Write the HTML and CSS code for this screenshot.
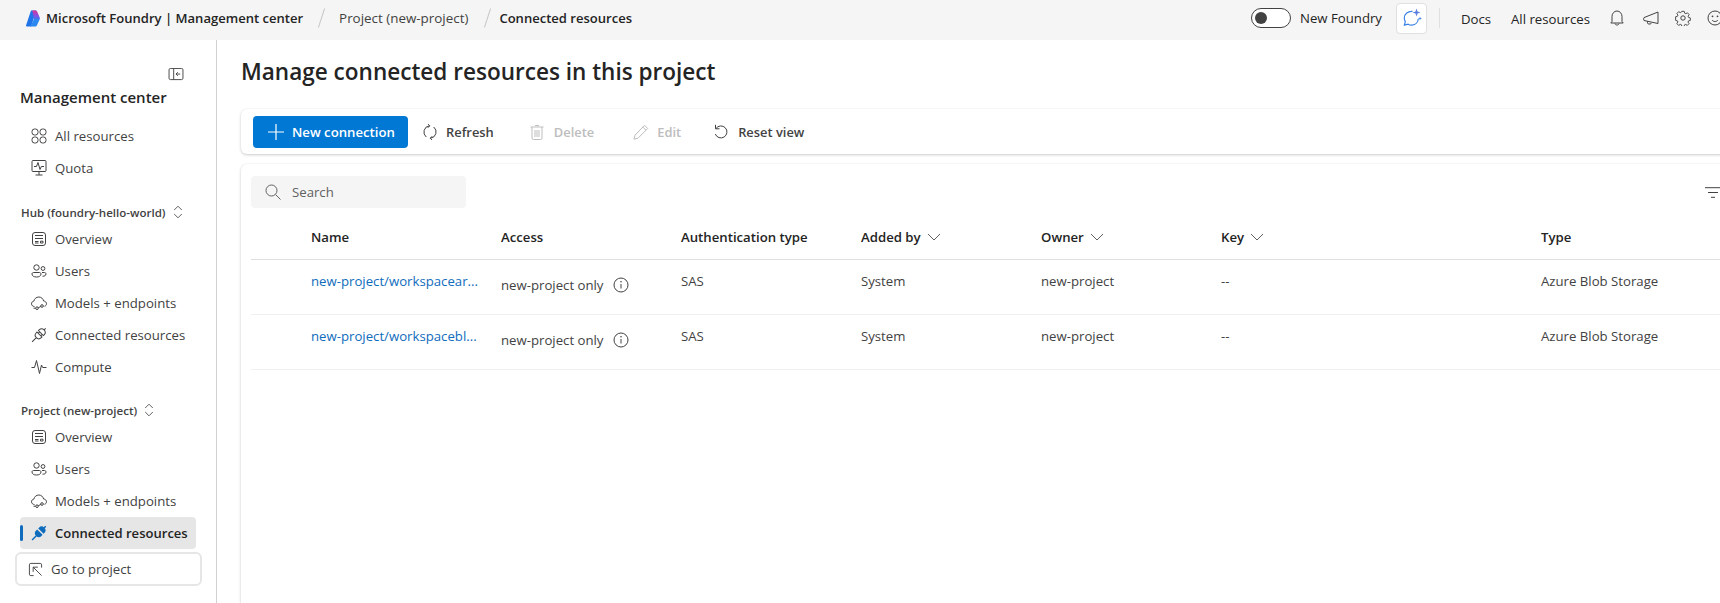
FILE: index.html
```html
<!DOCTYPE html>
<html lang="en">
<head>
<meta charset="utf-8">
<title>Manage connected resources</title>
<link rel="stylesheet" href="styles.css">
</head>
<body>
<svg class="defs" width="0" height="0" aria-hidden="true">
  <defs>
    <linearGradient id="logo-top" x1="0" y1="0" x2="0" y2="1"><stop offset="0" stop-color="#e0338f"/><stop offset=".55" stop-color="#8a4fe0"/><stop offset="1" stop-color="#3f78f0"/></linearGradient>
  </defs>
  <symbol id="i-overview" viewBox="0 0 16 16"><rect x="1.500" y="1.500" width="13" height="13" rx="2.500" fill="none" stroke="currentColor"/><path d="M4 4.500h8M4 7.500h8M4 10.500h3.500M4 12h3.500M9.500 10.200h2.500v1.800H9.500z" fill="none" stroke="currentColor"/></symbol>
  <symbol id="i-users" viewBox="0 0 16 16"><circle cx="5.500" cy="4.500" r="2.700" fill="none" stroke="currentColor"/><circle cx="12" cy="5.500" r="1.900" fill="none" stroke="currentColor"/><path d="M1 11c0-1 .8-1.500 1.700-1.500h5.600c.9 0 1.700.5 1.700 1.500 0 2-2 3-4.500 3S1 13 1 11zM11 9.500h2.500c.9 0 1.500.6 1.500 1.500 0 1.500-1.500 2.300-3.500 2.200" fill="none" stroke="currentColor"/></symbol>
  <symbol id="i-cloud" viewBox="0 0 16 16"><path d="M3.500 11.500C1.800 11.500.5 10.300.5 8.800c0-1.400 1-2.500 2.400-2.700C3.300 3.800 5.300 2 7.800 2c2.400 0 4.300 1.700 4.800 4 1.700.1 2.900 1.300 2.900 2.800 0 1.200-.8 2.200-2 2.500" fill="none" stroke="currentColor"/><circle cx="6" cy="13.200" r="1.300" fill="none" stroke="currentColor"/><circle cx="11" cy="11" r="1.300" fill="none" stroke="currentColor"/><path d="M7.200 12.700l2.600-1.200M2.500 13.200h2.200" fill="none" stroke="currentColor"/></symbol>
  <symbol id="i-plug" viewBox="0 0 16 16"><g transform="rotate(45 8 8)" fill="none" stroke="currentColor"><path d="M4.500 5.300v-1a3.500 3.500 0 0 1 7 0v1zM4.500 7.300h7v1a3.500 3.500 0 0 1-7 0zM8 .8v-2.300M8 11.800v6M6.200 5.300v2M9.800 5.300v2"/></g></symbol>
  <symbol id="i-plug-on" viewBox="0 0 16 16"><g transform="rotate(45 8 8)"><path d="M4.200 5.300v-1a3.800 3.800 0 0 1 7.600 0v1zM4.200 6.800h7.600v1.500a3.800 3.800 0 0 1-7.600 0z" fill="#0f6cbd"/><path d="M8 .8v-2.300M8 11.800v6" stroke="#0f6cbd" stroke-width="1.500" fill="none"/></g></symbol>
  <symbol id="i-updown" viewBox="0 0 10 14"><path d="M1.200 5L5 1.200 8.800 5M1.200 9L5 12.800 8.800 9" fill="none" stroke="currentColor"/></symbol>
  <symbol id="i-chev" viewBox="0 0 14 8"><path d="M1 1l6 6 6-6" fill="none" stroke="currentColor"/></symbol>
  <symbol id="i-info" viewBox="0 0 16 16"><circle cx="8" cy="8" r="7" fill="none" stroke="currentColor"/><path d="M8 7v4.500" stroke="currentColor" fill="none"/><circle cx="8" cy="4.800" r=".8" fill="currentColor"/></symbol>
</svg>

<header class="topbar">
  <svg class="logo" viewBox="0 0 14 17" width="14" height="17" aria-hidden="true">
    <path d="M5 .5h5.500L5 16.500H.8C.1 16.500-.2 16 0 15.400z" fill="#1e74e8"/>
    <path d="M6.300 .5h2.900c1.200 0 2.100.8 2.400 2L13.900 8c.2.800-.4 1.500-1.200 1.500H8z" fill="url(#logo-top)"/>
    <path d="M8 9h5.800L11 15.300c-.3.800-1 1.200-1.800 1.200H4.300z" fill="#2b88f0"/>
  </svg>
  <span class="crumb-main">Microsoft Foundry | Management center</span>
  <span class="slash slash-a"></span>
  <span class="crumb">Project (new-project)</span>
  <span class="slash slash-b"></span>
  <span class="crumb-main">Connected resources</span>
  <div class="topbar-right">
    <span class="toggle"><span class="knob"></span></span>
    <span class="toggle-label">New Foundry</span>
    <button class="chat-btn" type="button" aria-label="Chat">
      <svg viewBox="0 0 20 20" width="20" height="20" aria-hidden="true">
        <path d="M10.500 3.400C6 2.900 2.300 6 2.300 10c0 1.400.4 2.500 1 3.500l-.9 3.600 3.700-.9c1.200.7 2.500 1 3.900.9 3.500-.3 6.100-3 6.300-6.400" fill="none" stroke="#3b82e6" stroke-width="1.200"/>
        <path d="M14.500 .5l1 3 3 1-3 1-1 3-1-3-3-1 3-1z" fill="#5b7fe0"/>
        <path d="M18 8.500l.5 1.500 1.500.5-1.500.5-.5 1.500-.5-1.500-1.500-.5 1.500-.5z" fill="#3b82e6"/>
      </svg>
    </button>
    <span class="vsep"></span>
    <a class="top-link top-docs">Docs</a>
    <a class="top-link top-all">All resources</a>
    <svg class="top-icon icon-bell" viewBox="0 0 16 16" width="16" height="16" aria-hidden="true"><path d="M3 11.500V6.500C3 3.500 5.200 1 8 1s5 2.500 5 5.500v5l1.200 1.500H1.800zM6 13.500c.2 1 1 1.500 2 1.500s1.800-.5 2-1.500" fill="none" stroke="currentColor"/></svg>
    <svg class="top-icon icon-mega" viewBox="0 0 16 16" width="16" height="16" aria-hidden="true"><path d="M15 2v11.500L1 10.500c-.5-.1-.5-2.500 0-2.900zM4.500 11.300v1.500c0 .8.600 1.200 1.300 1.200h1.300c.7 0 1.200-.5 1.200-1.100" fill="none" stroke="currentColor"/></svg>
    <svg class="top-icon" viewBox="0 0 16 16" width="16" height="16" aria-hidden="true"><path d="M6.700.9h2.600l.4 2 1.300.6 1.800-1 1.800 2-1.100 1.700.4 1.300 2 .6v2.700l-2 .5-.5 1.300 1.100 1.700-1.900 1.900-1.700-1.100-1.300.5-.5 2H6.700l-.4-2-1.300-.5-1.800 1.100-1.900-1.900 1.100-1.800-.5-1.200-2-.6V6.800l2-.5.5-1.300-1.100-1.700 1.900-2 1.800 1 1.300-.6z" fill="none" stroke="currentColor" transform="translate(.7 .5) scale(.92)"/><circle cx="8" cy="8" r="2.200" fill="none" stroke="currentColor"/></svg>
    <svg class="top-icon" viewBox="0 0 16 16" width="16" height="16" aria-hidden="true"><circle cx="8" cy="8" r="7" fill="none" stroke="currentColor"/><circle cx="5.500" cy="6.300" r=".9" fill="currentColor"/><circle cx="10.500" cy="6.300" r=".9" fill="currentColor"/><path d="M5 10c.8 1 1.800 1.500 3 1.500s2.200-.5 3-1.500" fill="none" stroke="currentColor"/></svg>
  </div>
</header>

<div class="shell">
  <aside class="sidebar">
    <div class="collapse-row">
      <svg viewBox="0 0 16 14" width="16" height="13" aria-hidden="true"><rect x=".5" y=".5" width="15" height="12" rx="1.500" fill="none" stroke="currentColor"/><path d="M5.500 .5v12" stroke="currentColor" fill="none"/><path d="M12.500 6.500H8M10 4.500L8 6.500l2 2" fill="none" stroke="currentColor"/></svg>
    </div>
    <h2 class="side-title">Management center</h2>
    <nav class="nav-group nav-top">
      <a class="nav-item"><svg class="nav-icon" viewBox="0 0 16 16" aria-hidden="true"><rect x="1" y="1" width="6" height="6" rx="2.500" fill="none" stroke="currentColor"/><rect x="9" y="1" width="6" height="6" rx="2.500" fill="none" stroke="currentColor"/><rect x="1" y="9" width="6" height="6" rx="2.500" fill="none" stroke="currentColor"/><rect x="9" y="9" width="6" height="6" rx="2.500" fill="none" stroke="currentColor"/></svg>All resources</a>
      <a class="nav-item"><svg class="nav-icon" viewBox="0 0 16 16" aria-hidden="true"><rect x="1" y=".5" width="14" height="11" rx="1" fill="none" stroke="currentColor"/><path d="M3 6.500h2.500L7 2.500 9 9.500l1.300-3H13M4.500 15h7M8 11.500V15" fill="none" stroke="currentColor"/></svg>Quota</a>
    </nav>
    <div class="group-label group-hub">Hub (foundry-hello-world)<svg class="updown" viewBox="0 0 10 14" aria-hidden="true"><use href="#i-updown"/></svg></div>
    <nav class="nav-group">
      <a class="nav-item"><svg class="nav-icon" viewBox="0 0 16 16" aria-hidden="true"><use href="#i-overview"/></svg>Overview</a>
      <a class="nav-item"><svg class="nav-icon" viewBox="0 0 16 16" aria-hidden="true"><use href="#i-users"/></svg>Users</a>
      <a class="nav-item"><svg class="nav-icon" viewBox="0 0 16 16" aria-hidden="true"><use href="#i-cloud"/></svg>Models + endpoints</a>
      <a class="nav-item"><svg class="nav-icon" viewBox="0 0 16 16" aria-hidden="true"><use href="#i-plug"/></svg>Connected resources</a>
      <a class="nav-item"><svg class="nav-icon" viewBox="0 0 16 16" aria-hidden="true"><path d="M.5 8.500h3L5.500 1.500l3 13 2-8.500 1.200 2.500h3.800" fill="none" stroke="currentColor"/></svg>Compute</a>
    </nav>
    <div class="group-label group-project">Project (new-project)<svg class="updown" viewBox="0 0 10 14" aria-hidden="true"><use href="#i-updown"/></svg></div>
    <nav class="nav-group">
      <a class="nav-item"><svg class="nav-icon" viewBox="0 0 16 16" aria-hidden="true"><use href="#i-overview"/></svg>Overview</a>
      <a class="nav-item"><svg class="nav-icon" viewBox="0 0 16 16" aria-hidden="true"><use href="#i-users"/></svg>Users</a>
      <a class="nav-item"><svg class="nav-icon" viewBox="0 0 16 16" aria-hidden="true"><use href="#i-cloud"/></svg>Models + endpoints</a>
      <a class="nav-item is-active"><svg class="nav-icon" viewBox="0 0 16 16" aria-hidden="true"><use href="#i-plug-on"/></svg>Connected resources</a>
    </nav>
    <button class="go-btn" type="button"><svg viewBox="0 0 16 16" width="15" height="15" aria-hidden="true"><path d="M6 14.500H3A1.500 1.500 0 0 1 1.500 13V3A1.500 1.500 0 0 1 3 1.500h10A1.500 1.500 0 0 1 14.500 3v3" fill="none" stroke="currentColor"/><path d="M5.500 5.500h5M5.500 5.500v5M5.500 5.500l9 9" fill="none" stroke="currentColor"/></svg>Go to project</button>
  </aside>

  <main class="main">
    <h1 class="page-title">Manage connected resources in this project</h1>
    <div class="toolbar card">
      <button class="primary" type="button"><svg viewBox="0 0 16 16" width="16" height="16" aria-hidden="true"><path d="M8 0v16M0 8h16" stroke="#fff" fill="none" stroke-width="1.200"/></svg>New connection</button>
      <span class="tool tool-refresh"><svg viewBox="0 0 16 16" width="16" height="16" aria-hidden="true"><path d="M7.500 1.800A6.300 6.300 0 0 0 4.300 13M8.500 14.200A6.300 6.300 0 0 0 11.700 3M5.800 0l2 1.800-2 2M10.200 16l-2-1.800 2-2" fill="none" stroke="currentColor"/></svg>Refresh</span>
      <span class="tool tool-delete is-off"><svg viewBox="0 0 14 16" width="14" height="16" aria-hidden="true"><path d="M5 1.500h4M.5 3h13M2 3v11a1.500 1.500 0 0 0 1.500 1.500h7A1.500 1.500 0 0 0 12 14V3M5 6v7M7 6v7M9 6v7" fill="none" stroke="currentColor"/></svg>Delete</span>
      <span class="tool tool-edit is-off"><svg viewBox="0 0 16 16" width="16" height="16" aria-hidden="true"><path d="M11.500 1.300l3.200 3.200L5 14.200l-4 1 1-4zM9.800 3l3.200 3.200" fill="none" stroke="currentColor"/></svg>Edit</span>
      <span class="tool tool-reset"><svg viewBox="0 0 16 16" width="16" height="16" aria-hidden="true"><path d="M3 4.500A6 6 0 1 1 2.300 10M2.500 .8v4h4" fill="none" stroke="currentColor"/></svg>Reset view</span>
    </div>
    <section class="card table-card">
      <div class="table-tools">
        <label class="search"><svg viewBox="0 0 16 16" width="16" height="16" aria-hidden="true"><circle cx="6.500" cy="6.500" r="5.500" fill="none" stroke="currentColor"/><path d="M10.500 10.500l5 5" stroke="currentColor" fill="none"/></svg><span>Search</span></label>
        <svg class="filter" viewBox="0 0 16 11" width="16" height="11" aria-hidden="true"><path d="M0 .7h16M3 5.500h10M6 10.300h4" stroke="currentColor" fill="none"/></svg>
      </div>
      <div class="row head">
        <span></span>
        <span>Name</span>
        <span>Access</span>
        <span>Authentication type</span>
        <span>Added by<svg class="chev" viewBox="0 0 14 8" aria-hidden="true"><use href="#i-chev"/></svg></span>
        <span>Owner<svg class="chev" viewBox="0 0 14 8" aria-hidden="true"><use href="#i-chev"/></svg></span>
        <span>Key<svg class="chev" viewBox="0 0 14 8" aria-hidden="true"><use href="#i-chev"/></svg></span>
        <span>Type</span>
      </div>
      <div class="row body">
        <span></span>
        <a class="name">new-project/workspacear...</a>
        <span class="access">new-project only<svg class="info" viewBox="0 0 16 16" aria-hidden="true"><use href="#i-info"/></svg></span>
        <span>SAS</span><span>System</span><span>new-project</span><span>--</span><span>Azure Blob Storage</span>
      </div>
      <div class="row body">
        <span></span>
        <a class="name">new-project/workspacebl...</a>
        <span class="access">new-project only<svg class="info" viewBox="0 0 16 16" aria-hidden="true"><use href="#i-info"/></svg></span>
        <span>SAS</span><span>System</span><span>new-project</span><span>--</span><span>Azure Blob Storage</span>
      </div>
    </section>
  </main>
</div>
</body>
</html>
```
FILE: styles.css
```css
* { box-sizing: border-box; }
html, body { margin: 0; height: 100%; }
body {
  font-family: "Open Sans", "Noto Sans", "Liberation Sans", sans-serif;
  font-size: 13.2px;
  color: #242424;
  background: #fff;
  overflow: hidden;
  height: 603px;
}
.defs { position: absolute; }
a { color: inherit; text-decoration: none; }
button { font: inherit; color: inherit; }

/* top bar */
.topbar {
  height: 40px;
  background: #f5f5f5;
  display: flex;
  align-items: center;
  padding: 0 0 4px 26px;
  white-space: nowrap;
}
.logo { flex: none; margin-right: 6px; }
.crumb-main { font-weight: 600; font-size: 13.05px; color: #242424; }
.crumb { color: #424242; font-size: 13.4px; }
.slash {
  width: 1px; height: 20px; background: #c8c8c8;
  transform: rotate(18deg);
  flex: none;
}
.slash-a { margin: 0 17px 0 18px; }
.slash-b { margin: 0 11px 0 19px; }
.topbar-right { margin-left: auto; display: flex; align-items: center; width: 469px; flex: none; }
.toggle {
  width: 40px; height: 20px; border: 1px solid #424242; border-radius: 10px;
  background: #fff; display: flex; align-items: center; padding-left: 3px; flex: none;
}
.knob { width: 12px; height: 12px; border-radius: 50%; background: #424242; }
.toggle-label { margin-left: 9px; width: 83px; flex: none; color: #242424; }
.chat-btn {
  width: 31px; height: 31px; margin-left: 13px; padding: 0;
  background: #fff; border: 1px solid #e0e0e0; border-radius: 4px;
  display: flex; align-items: center; justify-content: center; flex: none;
}
.vsep { width: 1px; height: 20px; background: #e0e0e0; margin-left: 12px; flex: none; }
.top-link { color: #242424; flex: none; position: relative; top: 1px; }
.top-docs { margin-left: 21px; width: 30px; }
.top-all { margin-left: 20px; width: 79px; }
.top-icon { color: #424242; flex: none; margin-left: 16px; }
.icon-bell { margin-left: 19px; }
.icon-mega { margin-left: 18px; }

/* shell */
.shell { display: flex; height: 563px; }
.sidebar {
  width: 217px; flex: none;
  border-right: 1px solid #d1d1d1;
  display: flex; flex-direction: column;
  padding: 28px 0 0 20px;
  color: #242424;
}
.collapse-row { height: 14px; padding-left: 148px; color: #424242; flex: none; }
.collapse-row svg { display: block; }
.side-title { margin: 4px 0 0; font-size: 15px; line-height: 22px; font-weight: 600; color: #242424; }
.nav-group { display: flex; flex-direction: column; width: 176px; }
.nav-top { margin-top: 12px; }
.nav-item {
  height: 32px; display: flex; align-items: center;
  padding-left: 11px; gap: 8px; color: #424242; border-radius: 4px; position: relative;
  white-space: nowrap;
}
.nav-icon { width: 16px; height: 16px; flex: none; color: #424242; }
.is-active { background: #e6e6e6; color: #242424; font-weight: 600; font-size: 13.05px; }
.is-active::before {
  content: ""; position: absolute; left: 0; top: 8px; width: 3px; height: 16px;
  background: #0f6cbd; border-radius: 2px;
}
.group-label {
  display: flex; align-items: center; margin-left: 1px;
  font-size: 11.55px; font-weight: 600; color: #424242; height: 18px; white-space: nowrap;
}
.group-hub { margin-top: 19px; }
.group-project { margin-top: 18px; }
.group-label + .nav-group { margin-top: 2px; }
.updown { width: 10px; height: 14px; margin-left: 7px; color: #616161; flex: none; }
.go-btn {
  margin: 3px 0 0 -5px; width: 187px; height: 34px;
  background: #fff; border: 2px solid #e6e6e6; border-radius: 6px;
  display: flex; align-items: center; gap: 8px; padding: 0 0 0 11px; color: #424242;
}

/* main */
.main { flex: 1; min-width: 0; padding-left: 24px; }
.page-title {
  margin: 16px 0 0; font-size: 22.55px; line-height: 32px; font-weight: 600; color: #242424;
  white-space: nowrap;
}
.card {
  background: #fff; border-radius: 6px;
  box-shadow: 0 1px 3px rgba(0,0,0,.2), 0 0 1px rgba(0,0,0,.08);
}
.toolbar {
  margin-top: 21px; height: 45px; width: 1500px;
  display: flex; align-items: center; padding-left: 12px;
}
.primary {
  height: 32px; width: 155px; background: #0078d4; color: #fff; font-weight: 600;
  border: 0; border-radius: 4px; display: flex; align-items: center; gap: 8px; padding: 0 0 0 15px; flex: none;
}
.tool { display: flex; align-items: center; gap: 8px; font-size: 12.9px; font-weight: 600; color: #424242; }
.is-off { color: #bdbdbd; }
.tool-refresh { margin-left: 14px; }
.tool-delete { margin-left: 36px; gap: 10px; }
.tool-edit { margin-left: 39px; }
.tool-reset { margin-left: 32px; gap: 9px; }
.table-card { margin-top: 10px; width: 1500px; height: 460px; padding: 12px 0 0 10px; }
.table-tools { display: flex; align-items: center; height: 32px; }
.search {
  width: 215px; height: 32px; background: #f5f5f5; border-radius: 4px;
  display: flex; align-items: center; gap: 11px; padding-left: 14px; color: #616161;
}
.filter { margin-left: 1239px; color: #424242; flex: none; }
.row {
  display: grid;
  grid-template-columns: 60px 190px 180px 180px 180px 180px 320px 130px;
  align-items: start;
  border-bottom: 1px solid #f0f0f0;
  width: 1490px;
}
.head {
  height: 52px; padding-top: 19px; font-weight: 600; line-height: 20px; color: #242424;
  border-bottom: 1px solid #e0e0e0;
}
.head span { display: flex; align-items: center; }
.chev { width: 14px; height: 8px; margin-left: 6px; color: #616161; }
.body { height: 55px; padding-top: 11px; line-height: 20px; color: #424242; }
.name { color: #0f6cbd; white-space: nowrap; }
.access { display: flex; align-items: center; height: 20px; margin-top: 4px; }
.info { width: 16px; height: 16px; margin-left: 10px; color: #424242; flex: none; }
```
